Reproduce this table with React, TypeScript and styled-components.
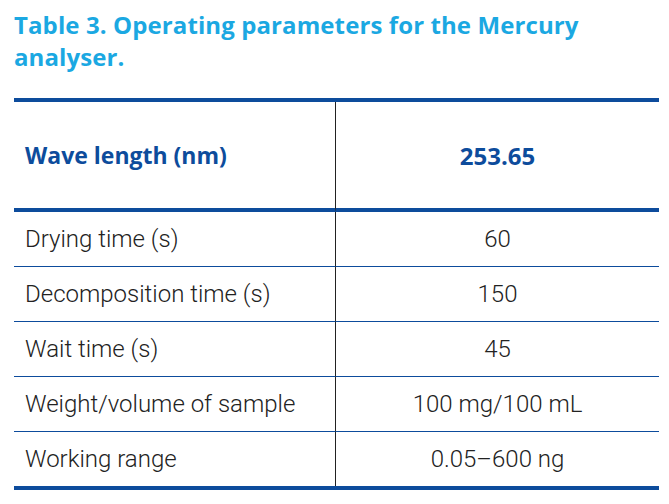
import React from "react";
import styled, { createGlobalStyle } from "styled-components";

const Global = createGlobalStyle`
  html, body { margin: 0; padding: 0; background: #ffffff; }
  body { font-family: Roboto, "Liberation Sans", sans-serif; }
`;

const Page = styled.div`
  width: 669px;
  height: 504px;
  padding: 9px 10px 0 14px;
  box-sizing: border-box;
  background: #fff;
`;

const Title = styled.h1`
  margin: 0;
  font-family: "Open Sans", Roboto, sans-serif;
  font-weight: 700;
  font-size: 24px;
  line-height: 32px;
  color: #1ba8e2;
  letter-spacing: 0.1px;
`;

const Table = styled.div`
  margin-top: 25px;
  width: 645px;
  border-top: 4px solid #0d4c9c;
  border-bottom: 4px solid #0d4c9c;
  display: grid;
  grid-template-columns: 322px 1fr;
`;

const Cell = styled.div<{ $head?: boolean; $value?: boolean; $last?: boolean }>`
  display: flex;
  align-items: center;
  justify-content: ${(p) => (p.$value ? "center" : "flex-start")};
  height: ${(p) => (p.$head ? "106px" : "54px")};
  padding-left: ${(p) => (p.$value ? "0" : "11px")};
  border-right: ${(p) => (p.$value ? "none" : "1px solid #222")};
  border-bottom: ${(p) =>
    p.$head ? "4px solid #0d4c9c" : p.$last ? "none" : "1px solid #0d4c9c"};
  font-family: ${(p) =>
    p.$head ? '"Open Sans", Roboto, sans-serif' : 'Roboto, "Liberation Sans", sans-serif'};
  font-size: ${(p) => (p.$head ? (p.$value ? "24px" : "23px") : "24px")};
  font-weight: ${(p) => (p.$head ? 700 : 300)};
  color: ${(p) => (p.$head ? "#0d4c9c" : "#222")};
  box-sizing: content-box;
`;

const rows: [string, string][] = [
  ["Drying time (s)", "60"],
  ["Decomposition time (s)", "150"],
  ["Wait time (s)", "45"],
  ["Weight/volume of sample", "100 mg/100 mL"],
  ["Working range", "0.05\u2013600 ng"],
];

export default function App() {
  return (
    <Page>
      <Global />
      <Title>
        Table 3. Operating parameters for the Mercury
        <br />
        analyser.
      </Title>
      <Table>
        <Cell $head>Wave length (nm)</Cell>
        <Cell $head $value>
          253.65
        </Cell>
        {rows.map(([k, v], i) => (
          <React.Fragment key={k}>
            <Cell $last={i === rows.length - 1}>{k}</Cell>
            <Cell $value $last={i === rows.length - 1}>
              {v}
            </Cell>
          </React.Fragment>
        ))}
      </Table>
    </Page>
  );
}
